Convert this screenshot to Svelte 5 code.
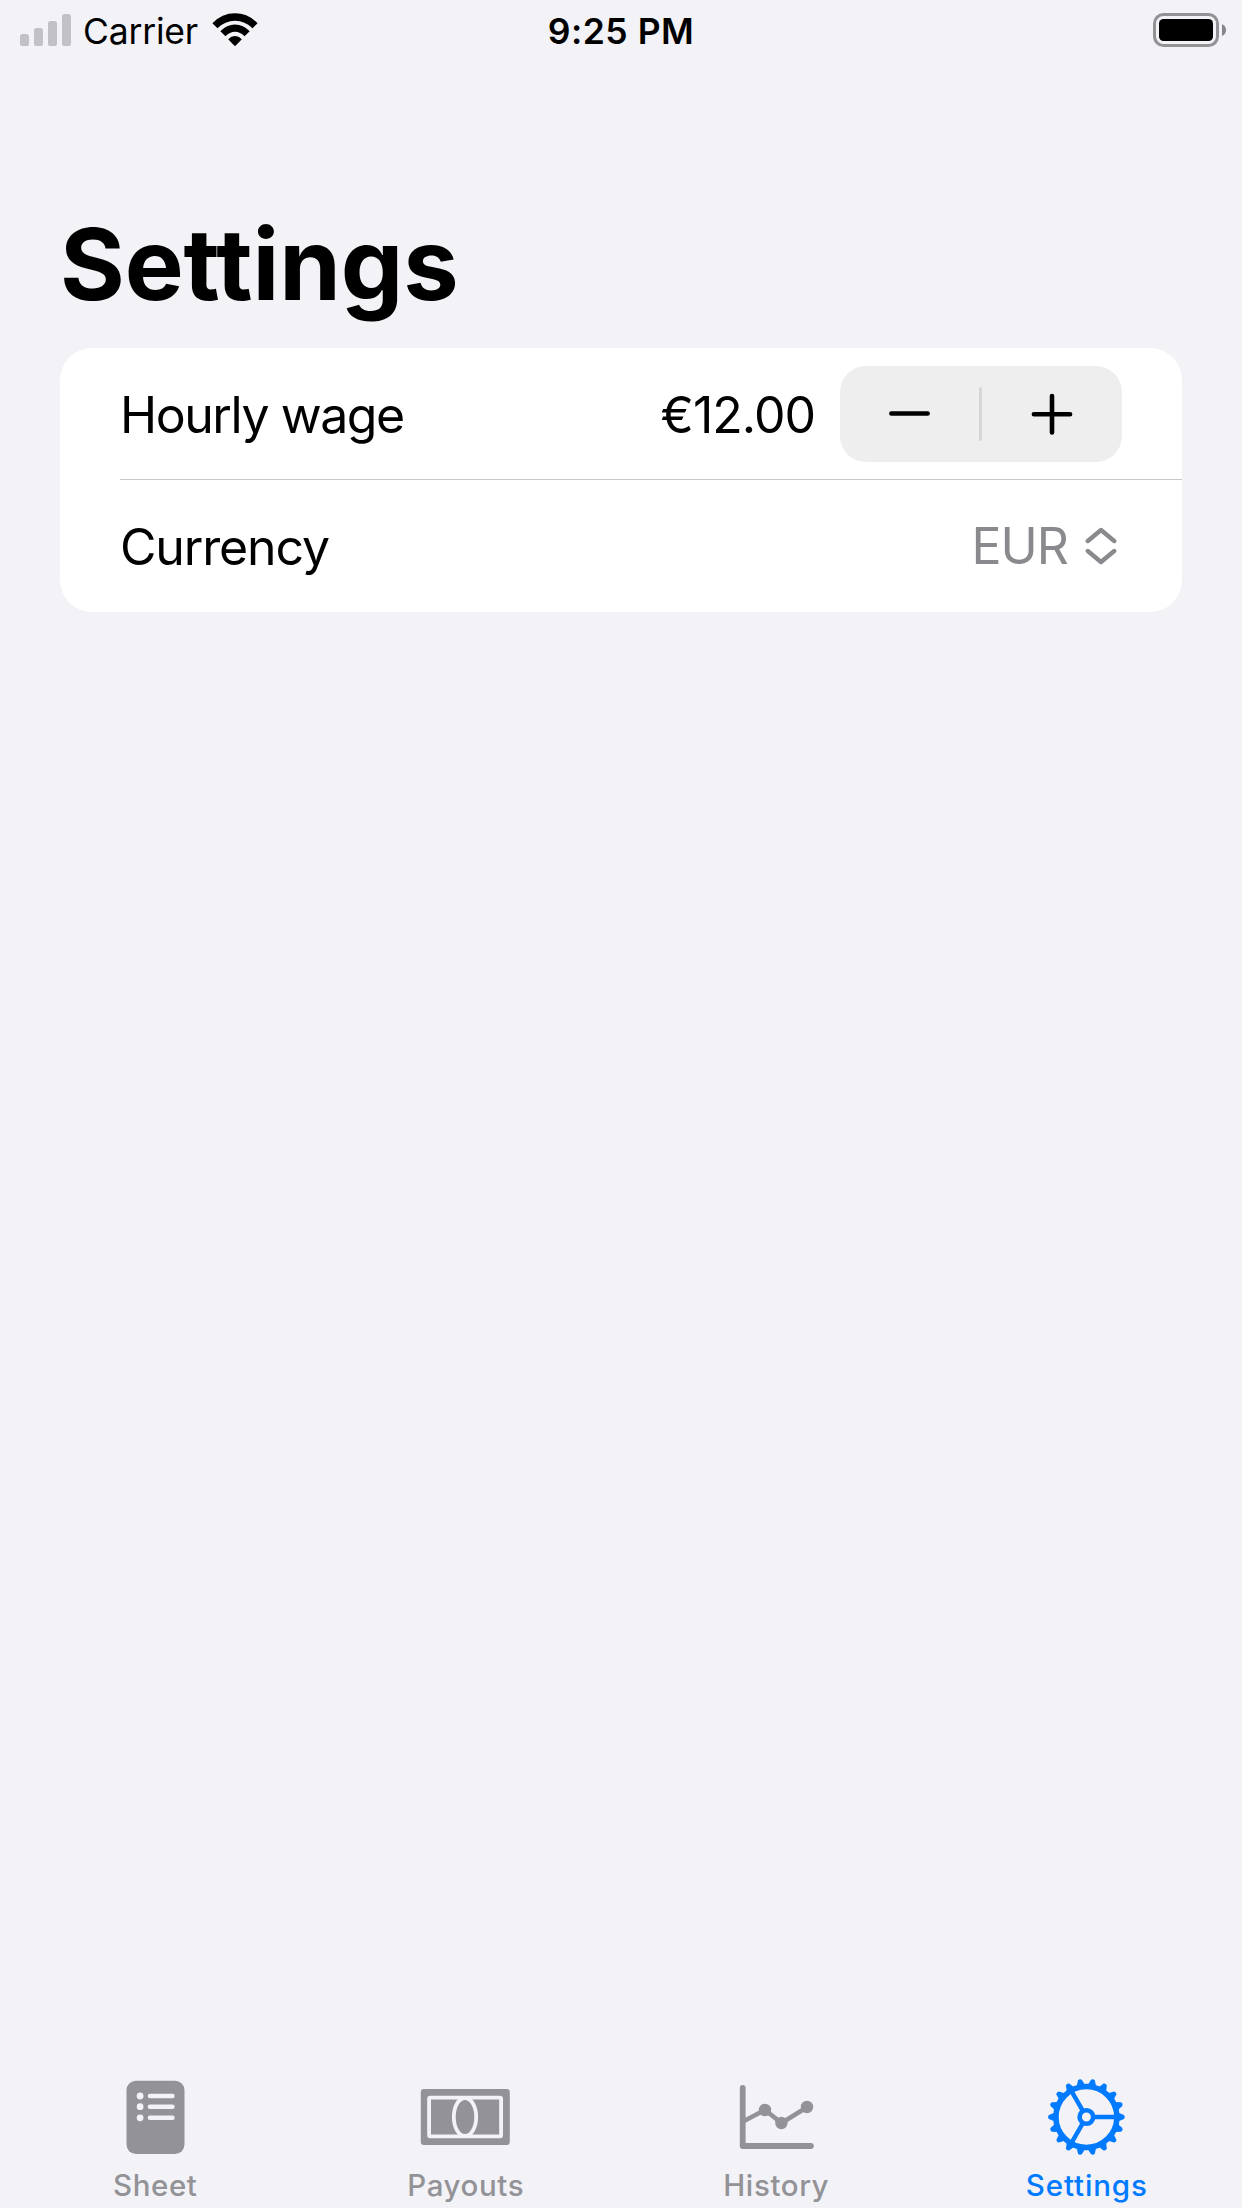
<script>
  let wage = $state(12);
  let active = $state('Settings');
  const tabs = ['Sheet', 'Payouts', 'History', 'Settings'];
  const teeth = Array.from({ length: 18 }, (_, i) => i * 20);
</script>

<div class="screen">
  <header class="status">
    <div class="left">
      <svg class="signal" width="51" height="32" viewBox="0 0 51 32">
        <rect x="0" y="20" width="9" height="12" rx="2.6" />
        <rect x="14" y="14" width="9" height="18" rx="2.6" />
        <rect x="28" y="7" width="9" height="25" rx="2.6" />
        <rect x="42" y="0" width="9" height="32" rx="2.6" />
      </svg>
      <span class="carrier">Carrier</span>
      <svg class="wifi" width="46" height="34" viewBox="0 0 46 34">
        <path d="M.4 10.2Q10 .3 23 .3T45.600 10.200L40.500 15.200Q33 7.700 23 7.700T5.500 15.200Z" />
        <path d="M8.300 18.200Q14.800 11.400 23 11.400T37.700 18.200L32.500 23.200Q28.300 18.700 23 18.700T13.500 23.200Z" />
        <path d="M16.200 26.300Q19.200 23 23 23T29.800 26.300L23.800 32.600Q23 33.300 22.200 32.600Z" />
      </svg>
    </div>
    <span class="time">9:25 PM</span>
    <div class="right">
      <svg width="74" height="34" viewBox="0 0 74 34">
        <rect x="1.500" y="1.500" width="63" height="31" rx="9" fill="none" stroke="#929195" stroke-width="3" />
        <rect x="6" y="6" width="54" height="22" rx="4.500" />
        <path d="M69 11Q73 13 73 17T69 23Z" fill="#858488" />
      </svg>
    </div>
  </header>

  <main>
    <h1>Settings</h1>
    <section class="card">
      <div class="row">
        <span class="label wage-label">Hourly wage</span>
        <span class="amount">€{wage.toFixed(2)}</span>
        <div class="stepper">
          <button aria-label="Decrease" onclick={() => wage--}>
            <svg width="42" height="42" viewBox="0 0 42 42"><path d="M2.400 20.500H38.600" /></svg>
          </button>
          <i></i>
          <button aria-label="Increase" onclick={() => wage++}>
            <svg width="42" height="42" viewBox="0 0 42 42"><path d="M2.900 21.300H39.100M21 3V39.500" /></svg>
          </button>
        </div>
      </div>
      <div class="line"></div>
      <div class="row last">
        <span class="label currency-label">Currency</span>
        <span class="code">EUR</span>
        <svg class="updown" width="32" height="38" viewBox="0 0 32 38">
          <path d="M2.800 14L16 3L29.200 14M2.800 24L16 35L29.200 24" />
        </svg>
      </div>
    </section>
  </main>

  <nav>
    {#each tabs as tab}
      <button class={['tab', tab.toLowerCase(), { active: active === tab }]} onclick={() => (active = tab)}>
        <svg width="92" height="80" viewBox="-46 -40 92 80">
          {#if tab === 'Sheet'}
            <rect x="-28.500" y="-36.300" width="58" height="73.300" rx="9.500" fill="currentColor" />
            <g fill="#f2f2f7">
              {#each [-21, -10.300, 0.800] as y}
                <circle cx="-14.900" cy={y} r="3.400" />
                <rect x="-7.300" y={y - 2.200} width="27" height="4.400" rx="2.200" />
              {/each}
            </g>
          {:else if tab === 'Payouts'}
            <rect x="-45.200" y="-28" width="89" height="56" rx="3" fill="currentColor" />
            <g fill="none" stroke="#f2f2f7" stroke-width="3.800">
              <rect x="-36.900" y="-19.300" width="72" height="38.600" rx="1" />
              <ellipse cx="-1" cy="0" rx="11.200" ry="19" />
            </g>
          {:else if tab === 'History'}
            <g fill="none" stroke="currentColor" stroke-linecap="round" stroke-linejoin="round">
              <path d="M-33.300 -29.200V29H34.900" stroke-width="5.800" />
              <path d="M-33 4.500L-11 -7L5.500 6L31 -9.700" stroke-width="4.600" />
            </g>
            <g fill="currentColor">
              <circle cx="-11" cy="-7" r="6.200" />
              <circle cx="5.400" cy="6" r="6.200" />
              <circle cx="31" cy="-10" r="6.200" />
            </g>
          {:else}
            <g transform="translate(-.6 0)">
              <g fill="none" stroke="currentColor">
                <circle r="30.500" stroke-width="5.600" />
                <circle r="6.800" stroke-width="4.600" />
                <path d="M8 0H29M-4 -6.930L-14.500 -25.110M-4 6.930L-14.500 25.110" stroke-width="4.400" />
              </g>
              {#each teeth as angle}
                <path d="M32 -4.200L37.600 -1.900Q39.200 0 37.600 1.900L32 4.200Z" fill="currentColor" transform="rotate({angle})" />
              {/each}
            </g>
          {/if}
        </svg>
        <span>{tab}</span>
      </button>
    {/each}
  </nav>
</div>

<style>
  :global(body) {
    background: #f2f2f7;
  }
  .screen {
    display: flex;
    flex-direction: column;
    width: 1242px;
    height: 2208px;
    overflow: hidden;
    background: #f2f2f7;
    color: #000;
    font-family: Inter, 'Liberation Sans', sans-serif;
  }
  svg {
    display: block;
    flex: none;
  }
  button {
    padding: 0;
    border: 0;
    background: none;
    font: inherit;
    color: inherit;
  }
  .status {
    display: grid;
    grid-template-columns: 1fr auto 1fr;
    height: 60px;
    line-height: 44px;
    padding: 0 15px 0 20px;
    font-size: 35.500px;
  }
  .left {
    display: flex;
    align-items: flex-start;
  }
  .signal {
    margin-top: 14px;
    fill: #c2c1c6;
  }
  .carrier {
    width: 129px;
    margin: 10px 0 0 12px;
    letter-spacing: -0.200px;
  }
  .wifi {
    margin-top: 13px;
  }
  .time {
    margin: 10px 5px 0 0;
    font-weight: 600;
    letter-spacing: 0.500px;
  }
  .right {
    display: flex;
    justify-content: flex-end;
    padding-top: 13px;
  }
  main {
    flex: 1;
    padding: 144px 60px 0;
  }
  h1 {
    margin: 0;
    height: 144px;
    line-height: 120px;
    font-size: 99px;
    font-weight: 700;
    letter-spacing: -0.100px;
  }
  .card {
    border-radius: 32px;
    background: #fff;
    font-size: 50px;
  }
  .row {
    display: flex;
    align-items: center;
    height: 131px;
    padding: 0 60px;
  }
  .last {
    height: 132px;
  }
  .label {
    flex: 1;
    padding-top: 3px;
    white-space: nowrap;
  }
  .wage-label {
    letter-spacing: -1.450px;
  }
  .currency-label {
    padding-top: 2px;
    letter-spacing: -1.150px;
  }
  .line {
    height: 1px;
    margin-left: 60px;
    background: #c6c6c8;
  }
  .amount {
    margin-right: 25px;
    padding-top: 3px;
    letter-spacing: -1px;
  }
  .stepper {
    display: flex;
    align-items: center;
    width: 282px;
    height: 96px;
    border-radius: 26px;
    background: #eeeeee;
  }
  .stepper button {
    display: flex;
    flex: 1;
    justify-content: center;
  }
  .stepper path {
    fill: none;
    stroke: #000;
    stroke-width: 4.600;
    stroke-linecap: round;
  }
  .stepper i {
    width: 3px;
    height: 54px;
    margin: 0 1px 0 -1px;
    border-radius: 2px;
    background: #d6d6d6;
  }
  .code {
    margin-right: 17px;
    color: #8a8a8e;
    letter-spacing: -1px;
  }
  .updown {
    margin-right: 5px;
    fill: none;
    stroke: #8a8a8e;
    stroke-width: 4.400;
    stroke-linecap: round;
    stroke-linejoin: round;
  }
  nav {
    display: grid;
    grid-template-columns: repeat(4, 1fr);
    height: 131px;
  }
  .tab {
    display: flex;
    flex-direction: column;
    align-items: center;
    color: #929297;
    font-size: 29.500px;
    font-weight: 500;
    line-height: 36px;
    letter-spacing: 0.600px;
  }
  .tab span {
    margin-top: 10px;
  }
  .settings span {
    letter-spacing: 0.850px;
  }
  .active {
    color: #007aff;
  }
</style>
